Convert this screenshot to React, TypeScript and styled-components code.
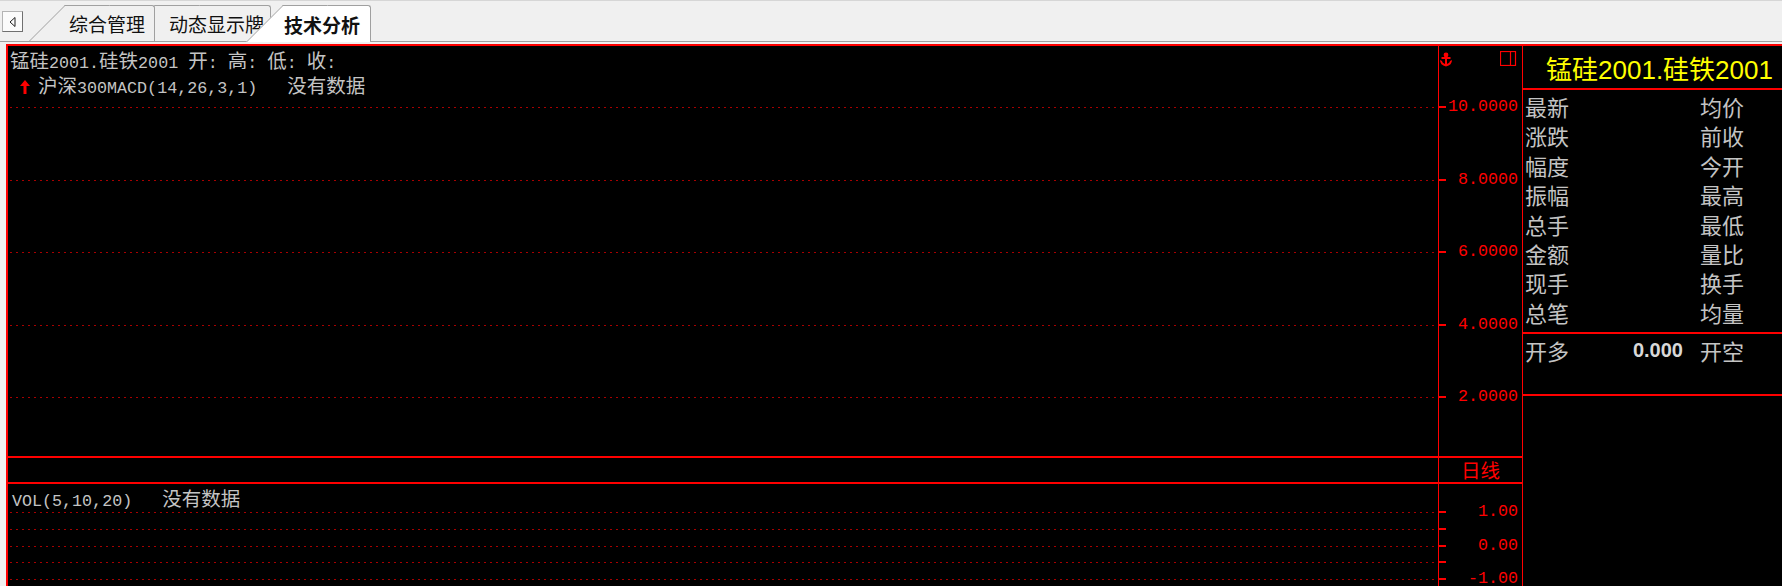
import React from "react";
import styled, { createGlobalStyle } from "styled-components";

const GlobalStyle = createGlobalStyle`
  html, body {
    margin: 0;
    padding: 0;
    background: #f0f0f0;
    overflow: hidden;
  }
  body {
    font-family: "Liberation Mono", "Noto Sans CJK SC", monospace;
  }
`;

const RED = "#ff0000";
const DOT = "#a80000";
const TEXT = "#c4c4c4";

const Screen = styled.div`
  width: 1782px;
  height: 586px;
  display: flex;
  flex-direction: column;
  background: #f0f0f0;
  overflow: hidden;
`;

const TabBar = styled.div`
  box-sizing: border-box;
  height: 42px;
  flex: none;
  display: flex;
  align-items: flex-end;
  padding-left: 1px;
  border-top: 1px solid #d6d6d6;
  border-bottom: 1px solid #a0a0a0;
`;

const ArrowButton = styled.div`
  box-sizing: border-box;
  width: 21px;
  height: 21px;
  margin: 0 0 9px 1px;
  display: flex;
  align-items: center;
  justify-content: center;
  background: #fbfbfb;
  border: 1px solid #b4b4b4;
  border-right-color: #707070;
  border-bottom-color: #707070;
`;

const Tab = styled.div<{ $active?: boolean; $gap: number; $width: number; $pad: number; $z: number }>`
  box-sizing: border-box;
  position: relative;
  z-index: ${(p) => p.$z};
  width: ${(p) => p.$width}px;
  height: ${(p) => (p.$active ? 37 : 36)}px;
  margin-left: ${(p) => p.$gap}px;
  margin-bottom: ${(p) => (p.$active ? -1 : 0)}px;
  padding-left: ${(p) => p.$pad}px;
  display: flex;
  align-items: center;
  background: ${(p) => (p.$active ? "#ffffff" : "#f0f0f0")};
  border-top: 1px solid #a0a0a0;
  border-right: 1px solid #a0a0a0;
  border-top-right-radius: 3px;
  font-family: "Noto Sans CJK SC", sans-serif;
  font-size: 19px;
  font-weight: ${(p) => (p.$active ? 700 : 400)};
  color: #111;
  white-space: nowrap;

  &::before {
    content: "";
    position: absolute;
    z-index: -1;
    top: -1px;
    bottom: 0;
    left: -37px;
    width: 44px;
    background: inherit;
    border-top: 1px solid #a0a0a0;
    border-left: 1px solid #a0a0a0;
    transform-origin: bottom left;
    transform: skewX(-45deg);
  }
`;

const Frame = styled.div`
  flex: 1;
  display: flex;
  padding: 2px 0 0 6px;
  min-height: 0;
`;

const Panel = styled.div`
  flex: 1;
  display: flex;
  background: #000;
  border-top: 2px solid ${RED};
  border-left: 2px solid ${RED};
  min-height: 0;
`;

const LeftPart = styled.div`
  box-sizing: border-box;
  width: 1515px;
  display: flex;
  flex-direction: column;
  border-right: 1px solid ${RED};
`;

const Section = styled.div<{ $height?: number }>`
  box-sizing: border-box;
  display: flex;
  ${(p) => (p.$height ? `height: ${p.$height}px; flex: none;` : "flex: 1;")}
  border-bottom: ${(p) => (p.$height ? `2px solid ${RED}` : "none")};
`;

const ChartCell = styled.div<{ $padLeft: number }>`
  position: relative;
  flex: 1;
  padding: 1px 0 0 ${(p) => p.$padLeft}px;
  color: ${TEXT};
  font-size: 16.7px;
  line-height: 25px;
  white-space: pre;
`;

const GridLayer = styled.svg`
  position: absolute;
  inset: 0;
  width: 100%;
  height: 100%;
`;

const HeaderLine = styled.div`
  position: relative;
  height: 25px;
`;

const Han = styled.span`
  font-family: "Noto Sans CJK SC", sans-serif;
  font-size: 19.5px;
`;

const UpArrow = styled.svg`
  width: 10px;
  height: 14px;
  margin: 0 8px 0 10px;
  vertical-align: -1px;
`;

const AxisCell = styled.div`
  box-sizing: border-box;
  position: relative;
  width: 84px;
  flex: none;
  border-left: 1px solid ${RED};
  color: ${RED};
`;

const Tick = styled.div`
  position: absolute;
  left: 0;
  width: 7px;
  height: 2px;
  background: ${RED};
`;

const AxisLabel = styled.div`
  position: absolute;
  right: 4px;
  height: 22px;
  line-height: 22px;
  font-size: 16.7px;
`;

const PinIcon = styled.svg`
  position: absolute;
  left: 0;
  top: 6px;
  width: 14px;
  height: 15px;
`;

const SplitIcon = styled.svg`
  position: absolute;
  left: 61px;
  top: 5px;
  width: 17px;
  height: 15px;
`;

const DayLabel = styled.div`
  width: 100%;
  text-align: center;
  line-height: 24px;
  font-family: "Noto Sans CJK SC", sans-serif;
  font-size: 19.5px;
  color: ${RED};
`;

const InfoPanel = styled.div`
  flex: 1;
  display: flex;
  flex-direction: column;
  font-family: "Noto Sans CJK SC", sans-serif;
  color: ${TEXT};
`;

const Title = styled.div`
  box-sizing: border-box;
  height: 44px;
  flex: none;
  display: flex;
  align-items: center;
  justify-content: center;
  padding-left: 14px;
  border-bottom: 2px solid ${RED};
  color: #ffff00;
  font-family: "Liberation Sans", "Noto Sans CJK SC", sans-serif;
  font-size: 26px;
  white-space: nowrap;
`;

const StatGrid = styled.div`
  display: grid;
  grid-template-columns: 175px 1fr;
  grid-auto-rows: 29.4px;
  padding: 2px 0 5px 2px;
  border-bottom: 2px solid ${RED};
  font-size: 22px;
  line-height: 29.4px;
`;

const OpenSection = styled.div`
  box-sizing: border-box;
  height: 62px;
  flex: none;
  display: grid;
  grid-template-columns: 60px 81px auto;
  column-gap: 17px;
  align-content: start;
  padding-left: 2px;
  border-bottom: 2px solid ${RED};
  font-size: 22px;
  line-height: 32px;
`;

const OpenValue = styled.span`
  text-align: right;
  font-family: "Liberation Sans", sans-serif;
  font-weight: 700;
  font-size: 20px;
  color: #d8d8d8;
`;

const CJK_RE = /([\u3000-\u9fff\uff00-\uffef]+)/;

const Mixed = ({ text }: { text: string }) => (
  <>
    {text.split(CJK_RE).map((part, i) =>
      CJK_RE.test(part) ? <Han key={i}>{part}</Han> : part
    )}
  </>
);

interface AxisLine {
  y: number;
  label?: string;
}

const mainTop = 61;
const mainStep = 36.3;
const mainAxis: AxisLine[] = [10, 8, 6, 4, 2].map((v) => ({
  y: mainTop + (10 - v) * mainStep,
  label: v.toFixed(4),
}));

const volAxis: AxisLine[] = [1, 0.5, 0, -0.5, -1].map((v) => ({
  y: 61.5 - v * 33.6,
  label: Number.isInteger(v) ? v.toFixed(2) : undefined,
}));

const DottedGrid = ({ lines }: { lines: AxisLine[] }) => (
  <GridLayer>
    {lines.map((l) => (
      <line
        key={l.y}
        x1={2}
        x2="100%"
        y1={Math.round(l.y) + 0.5}
        y2={Math.round(l.y) + 0.5}
        stroke={DOT}
        strokeWidth={1}
        strokeDasharray="2 4"
      />
    ))}
  </GridLayer>
);

const Axis = ({ lines }: { lines: AxisLine[] }) => (
  <>
    {lines.map((l) => (
      <React.Fragment key={l.y}>
        <Tick style={{ top: Math.round(l.y) - 1 }} />
        {l.label && <AxisLabel style={{ top: l.y - 11 }}>{l.label}</AxisLabel>}
      </React.Fragment>
    ))}
  </>
);

const leftStats = ["最新", "涨跌", "幅度", "振幅", "总手", "金额", "现手", "总笔"];
const rightStats = ["均价", "前收", "今开", "最高", "最低", "量比", "换手", "均量"];

export default function App() {
  return (
    <Screen>
      <GlobalStyle />
      <TabBar>
        <ArrowButton>
          <svg width="7" height="10" viewBox="0 0 7 10">
            <polygon points="6,0.5 6,9.5 1,5" fill="none" stroke="#202020" strokeWidth="1" />
          </svg>
        </ArrowButton>
        <Tab $gap={43} $width={89} $pad={3} $z={2}>综合管理</Tab>
        <Tab $gap={1} $width={115} $pad={13} $z={1}>动态显示牌</Tab>
        <Tab $active $gap={12} $width={88} $pad={1} $z={3}>技术分析</Tab>
      </TabBar>
      <Frame>
        <Panel>
          <LeftPart>
            <Section $height={412}>
              <ChartCell $padLeft={2}>
                <DottedGrid lines={mainAxis} />
                <HeaderLine>
                  <Mixed text="锰硅2001.硅铁2001 开: 高: 低: 收:" />
                </HeaderLine>
                <HeaderLine>
                  <UpArrow viewBox="0 0 10 14">
                    <polygon points="5,0 10,6 6.5,6 6.5,14 3.5,14 3.5,6 0,6" fill={RED} />
                  </UpArrow>
                  <Mixed text="沪深300MACD(14,26,3,1)   没有数据" />
                </HeaderLine>
              </ChartCell>
              <AxisCell>
                <PinIcon viewBox="0 0 14 15">
                  <circle cx="7" cy="3" r="2.4" fill={RED} />
                  <rect x="2.5" y="5" width="9" height="2" fill={RED} />
                  <rect x="6" y="5" width="2" height="9" fill={RED} />
                  <path d="M1 8 Q1 13 7 14.5 Q13 13 13 8 L11 9 Q10.5 11.5 7 12 Q3.5 11.5 3 9 Z" fill={RED} />
                </PinIcon>
                <SplitIcon viewBox="0 0 17 15">
                  <rect x="0.5" y="0.5" width="15" height="14" fill="none" stroke={RED} strokeWidth="1.2" />
                  <line x1="10.5" y1="0.5" x2="10.5" y2="14.5" stroke={RED} strokeWidth="1.2" />
                </SplitIcon>
                <Axis lines={mainAxis} />
              </AxisCell>
            </Section>
            <Section $height={26}>
              <ChartCell $padLeft={0} />
              <AxisCell>
                <DayLabel>日线</DayLabel>
              </AxisCell>
            </Section>
            <Section>
              <ChartCell $padLeft={4}>
                <DottedGrid lines={volAxis} />
                <HeaderLine>
                  <Mixed text="VOL(5,10,20)   没有数据" />
                </HeaderLine>
              </ChartCell>
              <AxisCell>
                <Axis lines={volAxis} />
              </AxisCell>
            </Section>
          </LeftPart>
          <InfoPanel>
            <Title>锰硅2001.硅铁2001</Title>
            <StatGrid>
              {leftStats.map((s, i) => (
                <React.Fragment key={s}>
                  <span>{s}</span>
                  <span>{rightStats[i]}</span>
                </React.Fragment>
              ))}
            </StatGrid>
            <OpenSection>
              <span>开多</span>
              <OpenValue>0.000</OpenValue>
              <span>开空</span>
            </OpenSection>
          </InfoPanel>
        </Panel>
      </Frame>
    </Screen>
  );
}
